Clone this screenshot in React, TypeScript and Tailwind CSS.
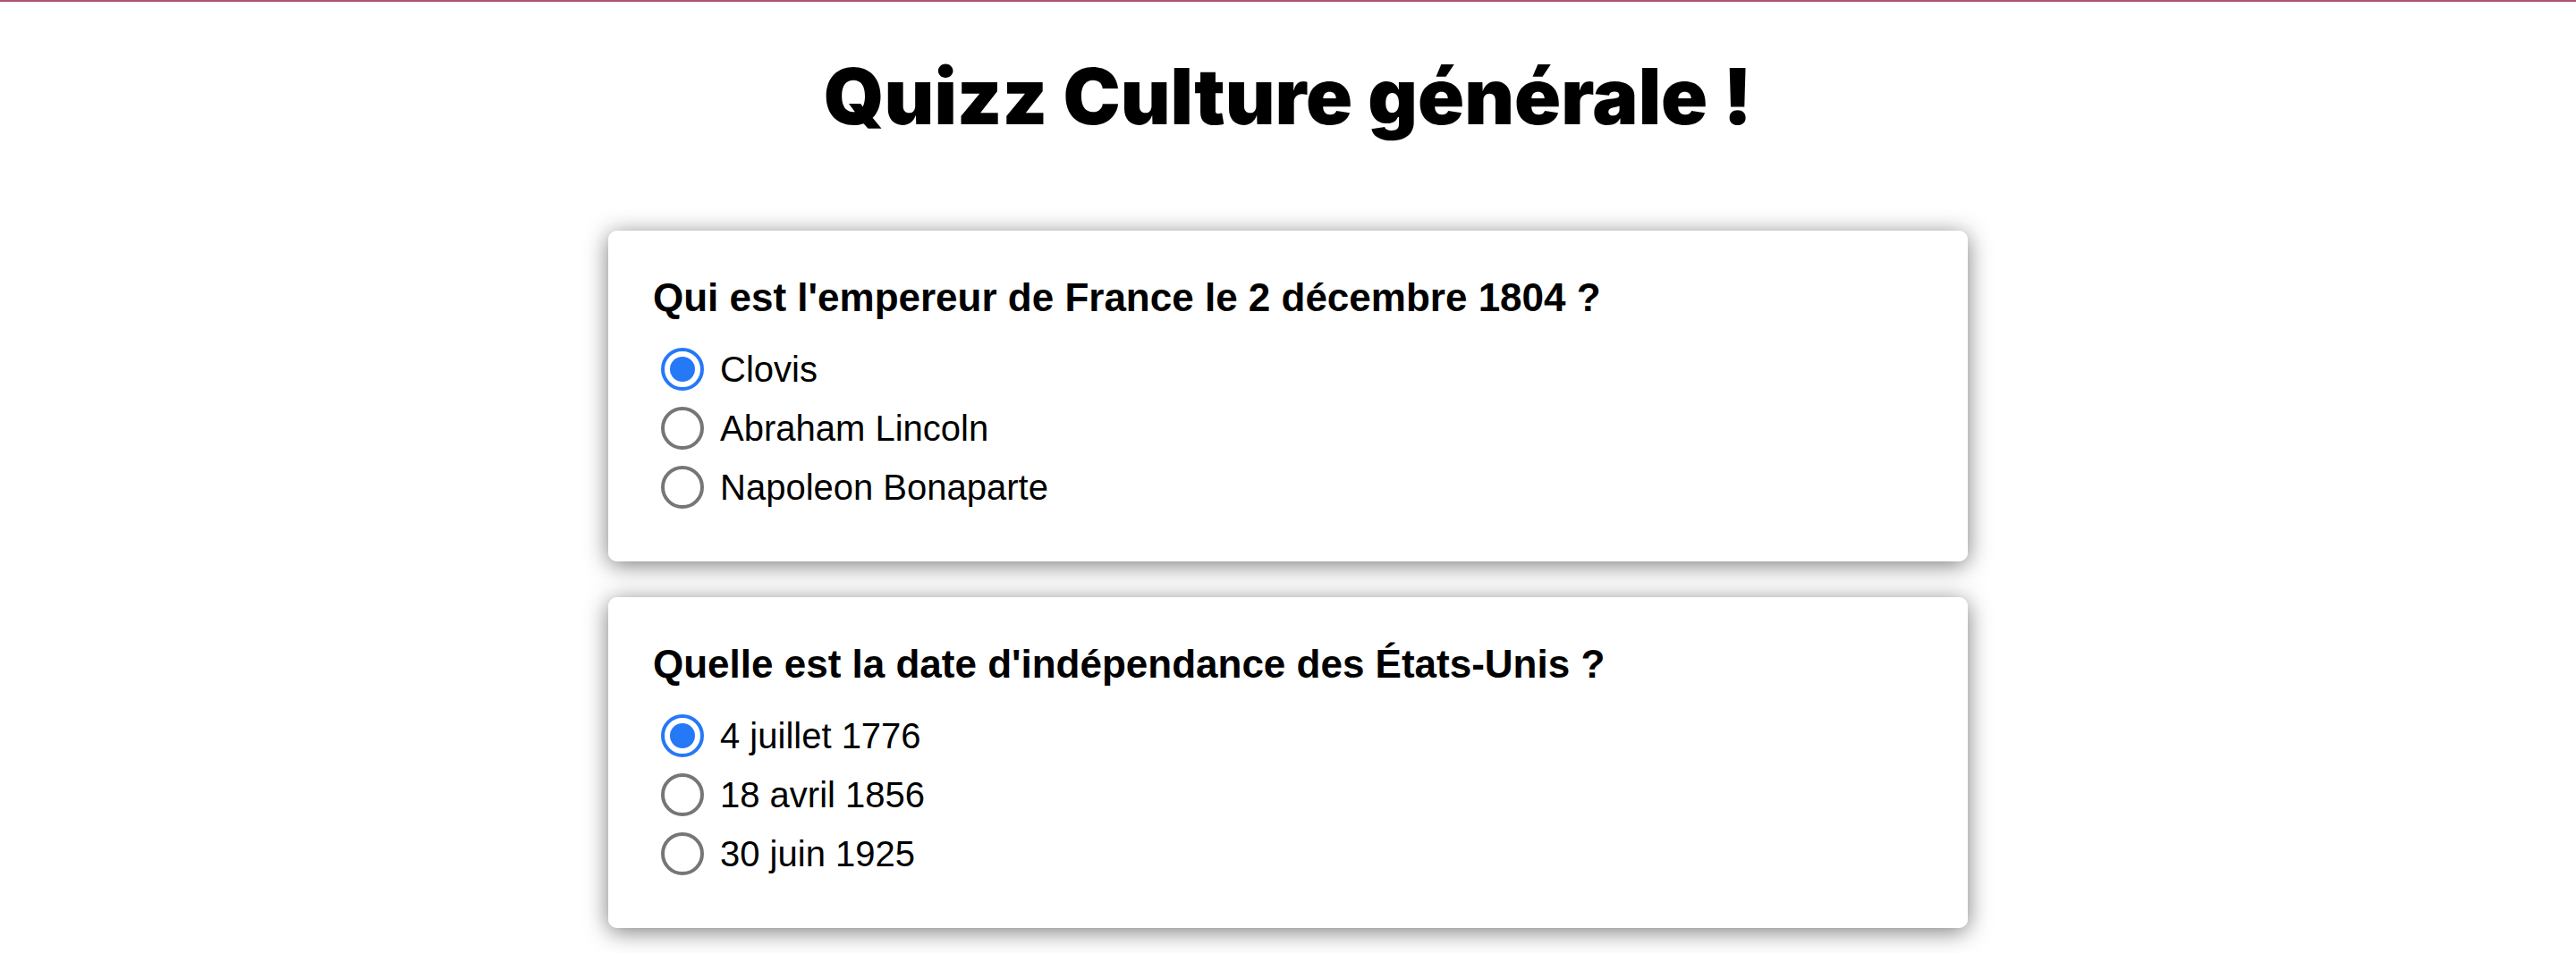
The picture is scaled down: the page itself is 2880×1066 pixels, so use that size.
import { useState } from "react";

type Question = { name: string; text: string; options: string[] };

const questions: Question[] = [
  {
    name: "q1",
    text: "Qui est l'empereur de France le 2 décembre 1804 ?",
    options: ["Clovis", "Abraham Lincoln", "Napoleon Bonaparte"],
  },
  {
    name: "q2",
    text: "Quelle est la date d'indépendance des États-Unis ?",
    options: ["4 juillet 1776", "18 avril 1856", "30 juin 1925"],
  },
];

function QuestionCard({ question }: { question: Question }) {
  const [selected, setSelected] = useState(0);
  return (
    <fieldset className="rounded-[10px] bg-white px-[50px] pt-[50px] pb-[50px] shadow-[0_4px_26px_rgba(0,0,0,0.52)]">
      <legend className="float-left mb-2 w-full text-[44px] leading-[50px] font-bold">{question.text}</legend>
      <div className="clear-both pt-[14px]">
        {question.options.map((option, i) => (
          <label key={option} className="flex h-[66px] items-center gap-[18px] pl-[9px] text-[40px] leading-[46px]">
            <input
              type="radio"
              name={question.name}
              checked={selected === i}
              onChange={() => setSelected(i)}
              className="grid size-12 shrink-0 appearance-none place-content-center rounded-full border-4 border-[#767676] bg-white before:size-7 before:rounded-full checked:border-[#2579f7] checked:before:bg-[#2579f7]"
            />
            {option}
          </label>
        ))}
      </div>
    </fieldset>
  );
}

export default function App() {
  return (
    <div className="border-t-2 border-[#a95272] bg-white font-['Liberation_Sans',Arial,sans-serif] text-black">
      <h1 className="pt-14 text-center font-[Inter,sans-serif] text-[86px] leading-[100px] font-black">
        Quizz Culture générale !
      </h1>
      <form className="mx-auto mt-[100px] mb-7 flex w-full max-w-[1520px] flex-col gap-10">
        {questions.map((q) => (
          <QuestionCard key={q.name} question={q} />
        ))}
      </form>
    </div>
  );
}
